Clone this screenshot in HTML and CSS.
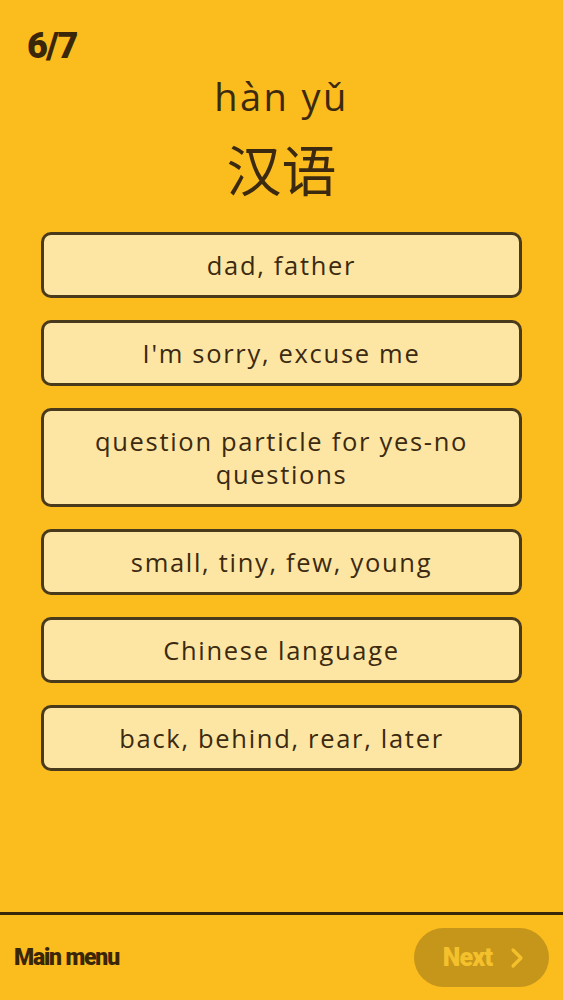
FILE: index.html
```html
<!DOCTYPE html>
<html lang="en">
<head>
<meta charset="utf-8">
<title>Quiz</title>
<link rel="stylesheet" href="styles.css">
</head>
<body>
<div class="app">
  <main class="main">
    <div class="progress">6/7</div>
    <div class="pinyin">hàn yǔ</div>
    <div class="hanzi">汉语</div>
    <div class="options">
      <button class="option">dad, father</button>
      <button class="option">I'm sorry, excuse me</button>
      <button class="option">question particle for yes-no questions</button>
      <button class="option">small, tiny, few, young</button>
      <button class="option">Chinese language</button>
      <button class="option">back, behind, rear, later</button>
    </div>
  </main>
  <footer class="footer">
    <span class="menu">Main menu</span>
    <button class="next">Next
      <svg class="chev" width="14" height="22" viewBox="0 0 14 22"><path d="M3 3 L11 11 L3 19" fill="none" stroke="currentColor" stroke-width="3.2" stroke-linecap="round" stroke-linejoin="round"/></svg>
    </button>
  </footer>
</div>
</body>
</html>
```
FILE: styles.css
```css
html, body {
  margin: 0;
  padding: 0;
  background: #fbbc1e;
}
.app {
  height: 1000px;
  display: flex;
  flex-direction: column;
  color: #3b2a10;
}
.main {
  flex: 1;
  display: flex;
  flex-direction: column;
  padding: 0 41px;
}
.progress {
  font-family: Roboto, sans-serif;
  font-weight: 900;
  font-size: 36px;
  letter-spacing: -1.5px;
  line-height: 40px;
  margin: 26px 0 0 -14px;
  color: #3a2608;
}
.pinyin {
  font-family: "Open Sans", sans-serif;
  font-weight: 500;
  font-size: 38px;
  letter-spacing: 2.4px;
  line-height: 46px;
  text-align: center;
  margin-top: 7px;
}
.hanzi {
  font-family: "Noto Sans CJK SC", sans-serif;
  font-size: 55px;
  line-height: 72px;
  text-align: center;
  margin-top: 12px;
}
.options {
  margin-top: 29px;
  display: flex;
  flex-direction: column;
  gap: 22px;
}
.option {
  font-family: "Open Sans", sans-serif;
  font-weight: 500;
  font-size: 25.5px;
  letter-spacing: 1.7px;
  line-height: 33px;
  color: #3b2a10;
  background: #fde6a4;
  border: 3px solid #4a3a1c;
  border-radius: 10px;
  padding: 13.5px 30px;
  min-height: 66px;
  text-align: center;
  width: 100%;
  box-sizing: border-box;
}
.footer {
  border-top: 3px solid #3a2608;
  height: 88px;
  box-sizing: border-box;
  display: flex;
  align-items: center;
  justify-content: space-between;
  padding: 0 14px;
}
.menu {
  font-family: Roboto, sans-serif;
  font-weight: 900;
  font-size: 23px;
  letter-spacing: -1.2px;
  color: #3a2608;
}
.next {
  font-family: Roboto, sans-serif;
  font-weight: 900;
  font-size: 25px;
  letter-spacing: -0.8px;
  color: #f4c12c;
  background: #c6961a;
  border: none;
  border-radius: 30px;
  width: 135px;
  height: 59px;
  display: flex;
  align-items: center;
  justify-content: center;
  gap: 18px;
  padding: 0 0 0 4px;
}
.chev {
  display: block;
}
```
